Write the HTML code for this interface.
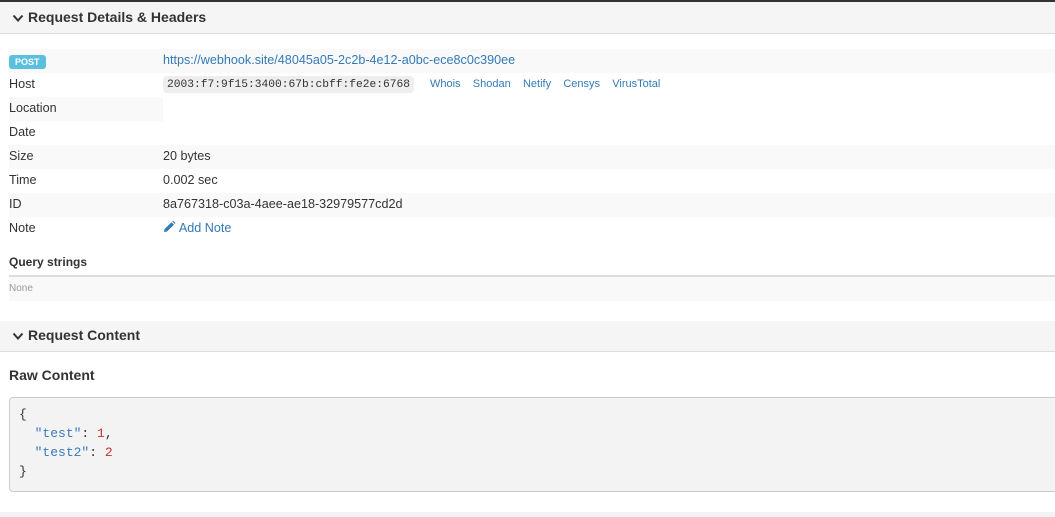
<!DOCTYPE html>
<html><head><meta charset="utf-8"><style>
*{margin:0;padding:0;box-sizing:border-box}
body{width:1055px;height:517px;overflow:hidden;background:#fff;font-family:"Liberation Sans",sans-serif;font-size:12.6px;color:#333;position:relative}
.abs{position:absolute}
.hdr{left:0;width:1055px;background:#f5f5f5;border-bottom:1px solid #ddd;font-size:14px;font-weight:bold;color:#333}
.hdr span{position:absolute;left:28px}
.chev{position:absolute;left:12px}
.row{left:9px;width:1046px;height:24px}
.s{background:#f9f9f9}
.lbl{position:absolute;left:0;top:4px}
.val{position:absolute;left:154px;top:4px}
a{color:#337ab7;text-decoration:none}
.mono{font-family:"Liberation Mono",monospace}
</style></head><body>
<div class="abs" style="left:0;top:0;width:1055px;height:2px;background:#333"></div>
<div class="abs hdr" style="top:2px;height:32px"><svg class="chev" style="top:12px" width="12" height="9" viewBox="0 0 12 9"><path d="M1.5 1.5L6 6.5L10.5 1.5" stroke="#333" stroke-width="2" fill="none"/></svg><span style="top:7px">Request Details &amp; Headers</span></div>

<div class="abs row s" style="top:49px"><div class="abs" style="left:0;top:6px;background:#5bc0de;color:#fff;font-size:9px;font-weight:bold;padding:2px 6px;border-radius:3px;line-height:10px">POST</div><div class="val"><a>https://webhook.site/48045a05-2c2b-4e12-a0bc-ece8c0c390ee</a></div></div>
<div class="abs row" style="top:73px"><div class="lbl">Host</div><div class="abs mono" style="left:154px;top:3px;background:#eee;border-radius:4px;padding:2px 4px;font-size:11.25px;color:#333;height:17px;line-height:14px">2003:f7:9f15:3400:67b:cbff:fe2e:6768</div><div class="abs" style="left:421px;top:5px;font-size:11px"><a>Whois</a>&nbsp;&nbsp;&nbsp;&nbsp;<a>Shodan</a>&nbsp;&nbsp;&nbsp;&nbsp;<a>Netify</a>&nbsp;&nbsp;&nbsp;&nbsp;<a>Censys</a>&nbsp;&nbsp;&nbsp;&nbsp;<a>VirusTotal</a></div></div>
<div class="abs" style="left:9px;top:97px;width:154px;height:24px;background:#f9f9f9"></div>
<div class="abs row" style="top:97px"><div class="lbl">Location</div></div>
<div class="abs row" style="top:121px"><div class="lbl">Date</div></div>
<div class="abs row s" style="top:145px"><div class="lbl">Size</div><div class="val">20 bytes</div></div>
<div class="abs row" style="top:169px"><div class="lbl">Time</div><div class="val">0.002 sec</div></div>
<div class="abs row s" style="top:193px"><div class="lbl">ID</div><div class="val">8a767318-c03a-4aee-ae18-32979577cd2d</div></div>
<div class="abs row" style="top:217px"><div class="lbl">Note</div><div class="val"><svg width="13" height="12" viewBox="0 0 13 12" style="vertical-align:-1px"><path d="M1 11L1.6 8L8.5 1.2L11 3.7L4 10.5Z" fill="#337ab7"/><path d="M9.3 0.5L10.3-0.2L12.5 2L11.8 3Z" fill="#337ab7"/></svg> <a>Add Note</a></div></div>

<div class="abs" style="left:9px;top:255px;font-weight:bold;font-size:12px">Query strings</div>
<div class="abs" style="left:9px;top:275px;width:1046px;height:2px;background:#ddd"></div>
<div class="abs" style="left:9px;top:277px;width:1046px;height:24px;background:#f9f9f9;color:#999;font-size:10px;padding-top:6px">None</div>

<div class="abs hdr" style="top:321px;height:31px"><svg class="chev" style="top:11px" width="12" height="9" viewBox="0 0 12 9"><path d="M1.5 1.5L6 6.5L10.5 1.5" stroke="#333" stroke-width="2" fill="none"/></svg><span style="top:6px">Request Content</span></div>

<div class="abs" style="left:9px;top:367px;font-size:14px;font-weight:bold">Raw Content</div>
<pre class="abs mono" style="left:9px;top:397px;width:1056px;height:95px;background:#f3f3f3;border:1px solid #ccc;border-radius:4px;padding:7px 9px;font-size:13px;line-height:19px;color:#333">{
  <span style="color:#3c7ab8">"test"</span>: <span style="color:#c9302c">1</span>,
  <span style="color:#3c7ab8">"test2"</span>: <span style="color:#c9302c">2</span>
}</pre>
<div class="abs" style="left:0;top:512px;width:1055px;height:5px;background:#f3f3f3"></div>
</body></html>
